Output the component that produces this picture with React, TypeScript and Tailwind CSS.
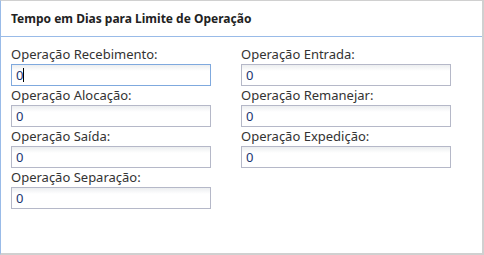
const fields = [
  { label: "Operação Recebimento:", value: "0", focused: true },
  { label: "Operação Entrada:", value: "0" },
  { label: "Operação Alocação:", value: "0" },
  { label: "Operação Remanejar:", value: "0" },
  { label: "Operação Saída:", value: "0" },
  { label: "Operação Expedição:", value: "0" },
  { label: "Operação Separação:", value: "0" },
];

function Field({ label, value, focused, wide }: { label: string; value: string; focused?: boolean; wide?: boolean }) {
  return (
    <div className="flex flex-col">
      <label className="h-[19px] pt-[1px] text-[13px] leading-[17px] text-[#333]">{label}</label>
      <div className="relative">
        <input
          readOnly
          value={value}
          className={`block h-[22px] ${wide ? "w-[210px]" : "w-[200px]"} border px-[4px] text-[13px] text-[#1d3570] outline-none bg-[linear-gradient(to_bottom,#eceef0_0px,#ffffff_6px)] ${
            focused ? "border-[#7fa9de]" : "border-[#b5b8c8]"
          }`}
        />
        {focused && <span className="absolute left-[12px] top-[4px] h-[14px] w-px bg-black" />}
      </div>
    </div>
  );
}

export default function App() {
  return (
    <div className="h-[255px] w-[484px] bg-white font-['Noto_Sans',sans-serif]">
      <div className="flex h-[255px] flex-col border-l border-t border-l-[#99bbe8] border-t-[#d0d0d0] border-r-2 border-b-2 border-r-[#d0d0d0] border-b-[#d0d0d0]">
        <div className="flex h-[36px] items-center border-b border-[#99bbe8] px-[10px]">
          <h2 className="text-[12px] font-bold text-[#222]">Tempo em Dias para Limite de Operação</h2>
        </div>
        <div className="grid grid-cols-[200px_210px] gap-x-[30px] gap-y-0 px-[10px] pt-[8px]">
          {fields.map((f, i) => (
            <Field key={f.label} {...f} wide={i % 2 === 1} />
          ))}
        </div>
      </div>
    </div>
  );
}
